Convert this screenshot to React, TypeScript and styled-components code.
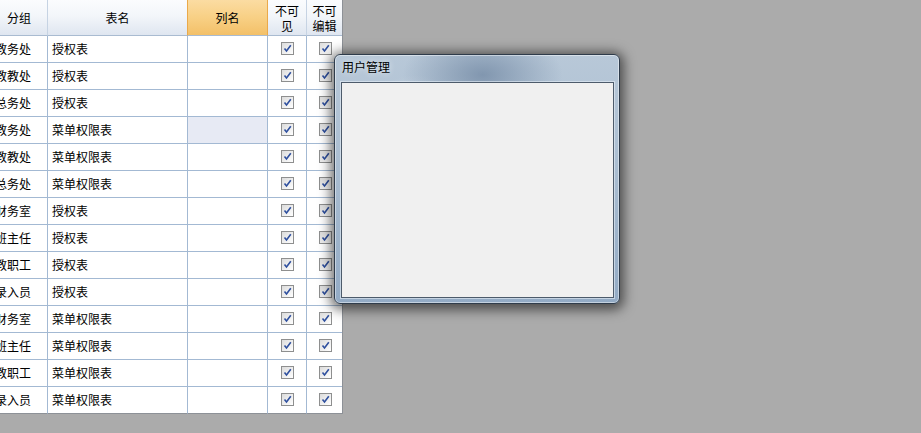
import React from 'react';
import styled, { createGlobalStyle, css } from 'styled-components';

const GlobalStyle = createGlobalStyle`
  html, body {
    margin: 0;
    padding: 0;
    background: #ababab;
    font-family: "Noto Sans CJK SC", "Noto Sans", sans-serif;
  }
`;

const Desktop = styled.div`
  position: relative;
  width: 921px;
  height: 433px;
  overflow: hidden;
  background: #ababab;
`;

const GridViewport = styled.div`
  width: 343px;
  overflow: hidden;
`;

const Grid = styled.div`
  display: grid;
  grid-template-columns: 57px 140px 80px 39px 35px;
  width: 351px;
  margin-left: -9px;
  border-right: 1px solid #8d9197;
  background: #fff;
  font-size: 12px;
  color: #000;
`;

const HeaderCell = styled.div<{ $active?: boolean; $last?: boolean }>`
  height: 35px;
  display: flex;
  align-items: center;
  justify-content: center;
  text-align: center;
  line-height: 15px;
  background: linear-gradient(#fbfcfe, #f3f6fa 45%, #dfe6f0);
  border-bottom: 1px solid #a9bbd1;
  border-right: ${p => (p.$last ? 'none' : '1px solid #c6d3e3')};
  ${p =>
    p.$active &&
    css`
      background: linear-gradient(#fbdca2, #f8d085 50%, #f3c068);
      border-right: 1px solid #eaa94a;
      border-left: 1px solid #eaa94a;
      margin-left: -1px;
    `}
`;

const Cell = styled.div<{ $selected?: boolean; $last?: boolean; $center?: boolean; $bottom?: boolean }>`
  height: 26px;
  display: flex;
  align-items: center;
  justify-content: ${p => (p.$center ? 'center' : 'flex-start')};
  padding-left: ${p => (p.$center ? '0' : '4px')};
  padding-bottom: ${p => (p.$center ? '0' : '2px')};
  box-sizing: border-box;
  height: 27px;
  white-space: nowrap;
  overflow: hidden;
  background: ${p => (p.$selected ? '#e7eaf4' : '#fff')};
  border-right: ${p => (p.$last ? 'none' : '1px solid #a3b9d3')};
  border-bottom: 1px solid ${p => (p.$bottom ? '#8d9197' : '#a3b9d3')};
`;

const CheckBox = styled.span`
  width: 11px;
  height: 11px;
  border: 1px solid #8e8f8f;
  background: linear-gradient(135deg, #dcdcdc, #f4f4f4 70%, #ffffff);
  display: flex;
  align-items: center;
  justify-content: center;
  margin-left: 1px;
  margin-bottom: 1px;
`;

const Window = styled.div`
  position: absolute;
  left: 334px;
  top: 54px;
  width: 284px;
  height: 248px;
  border: 1px solid #2f3c4b;
  border-radius: 6px;
  display: flex;
  flex-direction: column;
  background:
    radial-gradient(ellipse 80px 45px at 52% 8%, rgba(120, 142, 168, 0.85), rgba(120, 142, 168, 0) 100%),
    radial-gradient(ellipse 40px 30px at 28% 20%, rgba(255, 255, 255, 0.25), rgba(255, 255, 255, 0) 100%),
    linear-gradient(#b8c8d8, #acbfd2 40%, #93abc5);
  box-shadow:
    inset 0 0 0 1px rgba(255, 255, 255, 0.45),
    0 2px 12px 4px rgba(0, 0, 0, 0.55);
`;

const TitleBar = styled.div`
  height: 27px;
  box-sizing: border-box;
  padding: 0 0 4px 7px;
  display: flex;
  align-items: center;
  font-size: 12px;
  color: #000;
  text-shadow: 0 0 6px rgba(255, 255, 255, 0.8);
`;

const ClientArea = styled.div`
  flex: 1;
  margin: 0 5px 5px 6px;
  background: #f0f0f0;
  border: 1px solid #4d5b6b;
  box-shadow: 0 0 0 1px rgba(230, 238, 246, 0.6);
`;

const groups = ['教务处', '教教处', '总务处', '教务处', '教教处', '总务处', '财务室', '班主任', '教职工', '录入员', '财务室', '班主任', '教职工', '录入员'];
const tables = ['授权表', '授权表', '授权表', '菜单权限表', '菜单权限表', '菜单权限表', '授权表', '授权表', '授权表', '授权表', '菜单权限表', '菜单权限表', '菜单权限表', '菜单权限表'];

const Check = () => (
  <CheckBox>
    <svg width="9" height="9" viewBox="0 0 9 9">
      <path d="M1.5 4.5 L3.5 7 L7.8 1.2" fill="none" stroke="#2e4f9e" strokeWidth="1.6" />
    </svg>
  </CheckBox>
);

const App: React.FC = () => {
  return (
    <Desktop>
      <GlobalStyle />
      <GridViewport>
        <Grid>
          <HeaderCell>分组</HeaderCell>
          <HeaderCell>表名</HeaderCell>
          <HeaderCell $active>列名</HeaderCell>
          <HeaderCell>不可<br />见</HeaderCell>
          <HeaderCell $last>不可<br />编辑</HeaderCell>
          {groups.map((g, i) => {
            const bottom = i === groups.length - 1;
            return (
              <React.Fragment key={i}>
                <Cell $bottom={bottom}>{g}</Cell>
                <Cell $bottom={bottom}>{tables[i]}</Cell>
                <Cell $bottom={bottom} $selected={i === 3} />
                <Cell $bottom={bottom} $center><Check /></Cell>
                <Cell $bottom={bottom} $center $last><Check /></Cell>
              </React.Fragment>
            );
          })}
        </Grid>
      </GridViewport>
      <Window>
        <TitleBar>用户管理</TitleBar>
        <ClientArea />
      </Window>
    </Desktop>
  );
};

export default App;
